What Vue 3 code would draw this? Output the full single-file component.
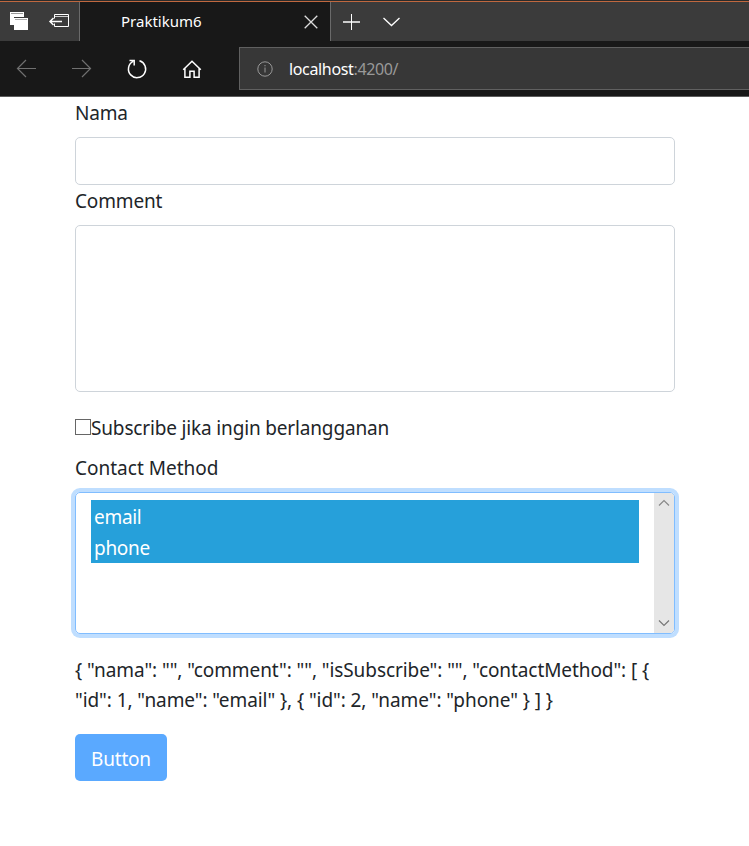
<script setup>
import { ref } from 'vue'

const nama = ref('')
const comment = ref('')
const methods = [
  { id: 1, name: 'email' },
  { id: 2, name: 'phone' },
]
</script>

<template>
  <div class="window">
    <header class="chrome">
      <div class="tabs">
        <div class="tab-tools">
          <svg width="80" height="39" viewBox="0 2 80 39">
            <path d="M10 12h14v5h-10v8h-4z" fill="#fff" />
            <path d="M11 13.5h12" stroke="#999" />
            <path d="M14 18h14v12h-14z" fill="#fff" />
            <path d="M15 19.5h12" stroke="#aaa" />
            <g fill="none" stroke="#fff">
              <path d="M54.5 18.5v-4h14v12h-14v-3" />
              <path d="M55 16.5h13" stroke="#ccc" />
              <path d="M50 21.5h12M53.5 18l-3.5 3.5 3.5 3.5" stroke-width="1.5" />
            </g>
          </svg>
        </div>
        <div class="tab">
          <span class="tab-title">Praktikum6</span>
          <svg class="close" width="14" height="14" viewBox="0 0 14 14">
            <path d="M.7.7l12.6 12.6M13.3.7L.7 13.3" stroke="#ddd" stroke-width="1.3" />
          </svg>
        </div>
        <svg width="80" height="39" viewBox="331 2 80 39" fill="none" stroke="#fff">
          <path d="M343 22h17" stroke="#ccc" stroke-width="2" />
          <path d="M351.5 14v16" />
          <path d="M383.5 18l8 7.5 8-7.5" stroke-width="1.3" />
        </svg>
      </div>
      <div class="toolbar">
        <svg width="239" height="55" viewBox="0 41 239 55" fill="none" stroke-width="1.2">
          <path d="M36 68.5H18M26 60l-8.5 8.5L26 77" stroke="#707070" />
          <path d="M72 68.5h18M82 60l8.5 8.5L82 77" stroke="#707070" />
          <path d="M139.5 60.8a8.6 8.6 0 1 1-6.4.6M129.5 60.6h4.7v4.8" stroke="#fff" stroke-width="1.5" />
          <path d="M183.2 69.8l8.8-8.6 8.8 8.6M184.9 68.5v8.8h5v-6h4.2v6h5v-8.8" stroke="#fff" stroke-width="1.5" />
        </svg>
        <div class="address">
          <svg width="16" height="16" viewBox="0 0 16 16" fill="none" stroke="#999">
            <circle cx="8" cy="8" r="7.2" />
            <path d="M8 6.5v5M8 4v1.3" />
          </svg>
          <span class="url">localhost<i>:4200/</i></span>
        </div>
      </div>
    </header>

    <form class="form" @submit.prevent>
      <label class="label nama" for="nama">Nama</label>
      <input id="nama" v-model="nama" class="control" type="text" />
      <label class="label comment" for="comment">Comment</label>
      <textarea id="comment" v-model="comment" class="control area"></textarea>
      <label class="check">
        <span class="box"></span><span>Subscribe jika ingin berlangganan</span>
      </label>
      <div class="label">Contact Method</div>
      <div class="select">
        <div class="options">
          <div v-for="m in methods" :key="m.id" class="option">{{ m.name }}</div>
        </div>
        <div class="scroll">
          <svg width="12" height="8" viewBox="0 0 12 8"><path d="M1 6.5l5-5 5 5" fill="none" stroke="#888" stroke-width="1.2" /></svg>
          <svg width="12" height="8" viewBox="0 0 12 8"><path d="M1 1.5l5 5 5-5" fill="none" stroke="#777" stroke-width="1.2" /></svg>
        </div>
      </div>
      <div class="json">
        <div>{ "nama": "", "comment": "", "isSubscribe": "", "contactMethod": [ {</div>
        <div>"id": 1, "name": "email" }, { "id": 2, "name": "phone" } ] }</div>
      </div>
      <button class="button" type="submit">Button</button>
    </form>
  </div>
</template>

<style>
body { background: #fff; }
</style>

<style scoped>
.window {
  box-sizing: border-box;
  height: 846px;
  overflow: hidden;
  font-family: "Noto Sans", "Open Sans", sans-serif;
  font-size: 19px;
  line-height: 30px;
  color: #212529;
}
.window * { box-sizing: border-box; }
svg { display: block; flex: none; }
.chrome {
  height: 97px;
  background: #181818;
  border-bottom: 1px solid #5c5c5c;
}
.tabs {
  display: flex;
  height: 41px;
  padding-top: 1px;
  background: #3b3b3b;
  border-top: 1px solid #2b2b2b;
  box-shadow: inset 0 1px #c0683f;
}
.tab-tools { width: 80px; border-right: 1px solid #6a6a6a; overflow: hidden; }
.tab {
  display: flex;
  align-items: center;
  width: 251px;
  padding: 0 12px 0 41px;
  background: #181818;
  border-right: 1px solid #6a6a6a;
  color: #fff;
  font-size: 15px;
}
.tab-title { padding-bottom: 2px; white-space: nowrap; }
.close { margin-left: auto; }
.toolbar { display: flex; height: 55px; }
.address {
  display: flex;
  flex: 1;
  align-items: center;
  height: 43px;
  margin-top: 6px;
  padding-left: 17px;
  gap: 16px;
  background: #373737;
  border: 1px solid #606060;
  border-right: 0;
  color: #fff;
  font-size: 16px;
  letter-spacing: -0.35px;
}
.url i { font-style: normal; color: #999; }
.form {
  display: flex;
  flex-direction: column;
  width: 600px;
  margin-left: 75px;
  padding-top: 1px;
}
.label { height: 30px; white-space: nowrap; }
.nama { letter-spacing: -0.2px; }
.comment { letter-spacing: -0.15px; }
.control {
  display: block;
  width: 600px;
  height: 48px;
  margin: 9px 0 1px;
  padding: 7px 15px;
  border: 1px solid #ced4da;
  border-radius: 5px;
  background: #fff;
  font: inherit;
  outline: 0;
  resize: none;
}
.area { height: 167px; margin-bottom: 21px; }
.check {
  display: flex;
  align-items: center;
  height: 30px;
  margin-bottom: 10px;
  letter-spacing: -0.16px;
  white-space: nowrap;
}
.box { width: 16px; height: 16px; margin-top: -2px; border: 1px solid #666; background: #fff; }
.select {
  display: flex;
  justify-content: space-between;
  height: 142px;
  margin-top: 9px;
  border: 1px solid #80bdff;
  border-radius: 5px;
  box-shadow: 0 0 0 4px #bfdeff;
  overflow: hidden;
}
.options { width: 548px; height: 63px; margin: 7px 0 0 15px; background: #26a0da; }
.option { height: 31px; padding: 2px 0 0 3px; color: #fff; letter-spacing: -0.3px; }
.scroll {
  display: flex;
  flex-direction: column;
  align-items: center;
  justify-content: space-between;
  width: 20px;
  padding: 6px 0;
  background: #e6e6e6;
}
.json { margin-top: 21px; letter-spacing: -0.08px; white-space: nowrap; }
.button {
  width: 92px;
  height: 47px;
  margin-top: 19px;
  padding: 3px 0 0;
  border: 0;
  border-radius: 5px;
  background: #5aa9ff;
  color: #fff;
  font: inherit;
  letter-spacing: -0.2px;
}
</style>
